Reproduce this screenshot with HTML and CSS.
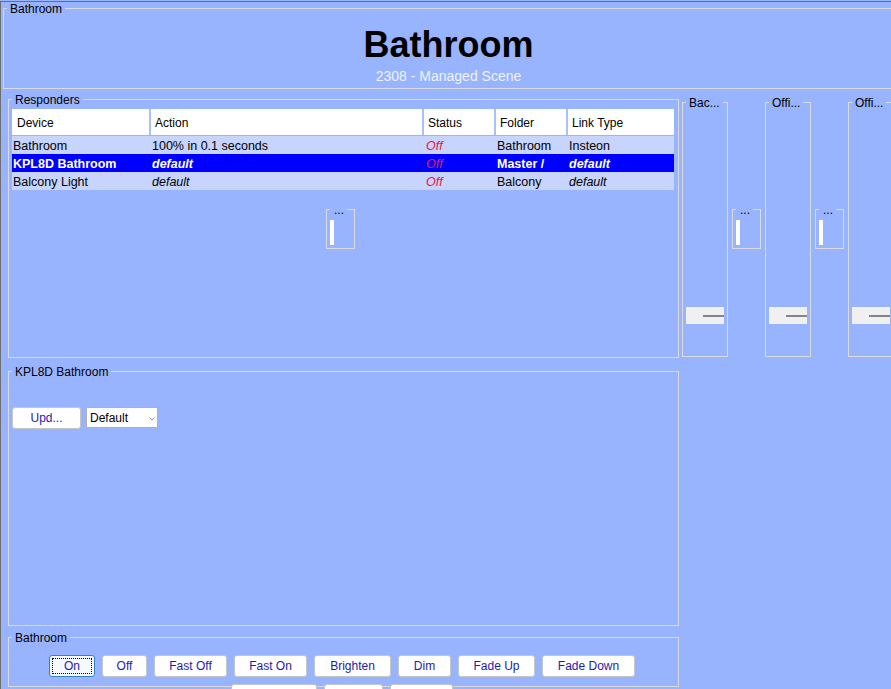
FILE: index.html
```html
<!DOCTYPE html>
<html lang="en">
<head>
<meta charset="utf-8">
<title>Bathroom</title>
<link rel="stylesheet" href="styles.css">
</head>
<body>
<div class="window">
  <fieldset class="group header">
    <legend>Bathroom</legend>
    <div class="header-body">
      <h1 class="title">Bathroom</h1>
      <div class="subtitle">2308 - Managed Scene</div>
    </div>
  </fieldset>

  <div class="main">
    <div class="leftcol">
      <fieldset class="group responders">
        <legend>Responders</legend>
        <div class="responders-body">
          <div class="grid" role="table">
            <div class="grid-row grid-head" role="row">
              <div class="cell">Device</div>
              <div class="cell">Action</div>
              <div class="cell">Status</div>
              <div class="cell">Folder</div>
              <div class="cell">Link Type</div>
            </div>
            <div class="grid-row grid-data" role="row">
              <div class="cell">Bathroom</div>
              <div class="cell">100% in 0.1 seconds</div>
              <div class="cell status">Off</div>
              <div class="cell">Bathroom</div>
              <div class="cell">Insteon</div>
            </div>
            <div class="grid-row grid-data selected" role="row">
              <div class="cell">KPL8D Bathroom</div>
              <div class="cell em">default</div>
              <div class="cell status">Off</div>
              <div class="cell">Master /</div>
              <div class="cell em">default</div>
            </div>
            <div class="grid-row grid-data" role="row">
              <div class="cell">Balcony Light</div>
              <div class="cell em">default</div>
              <div class="cell status">Off</div>
              <div class="cell">Balcony</div>
              <div class="cell em">default</div>
            </div>
          </div>
          <fieldset class="group mini mini-center">
            <legend>...</legend>
            <div class="mini-body"><div class="level-bar"></div></div>
          </fieldset>
        </div>
      </fieldset>

      <fieldset class="group kpl">
        <legend>KPL8D Bathroom</legend>
        <div class="kpl-body">
          <button class="btn btn-upd" type="button">Upd...</button>
          <div class="combo">
            <span>Default</span>
            <svg class="chev" width="6" height="4" viewBox="0 0 6 4"><polyline points="0.5,0.5 3,3.2 5.5,0.5" fill="none" stroke="#8a8a8a" stroke-width="1"/></svg>
          </div>
        </div>
      </fieldset>

      <fieldset class="group scene">
        <legend>Bathroom</legend>
        <div class="scene-body">
          <button class="btn btn-on focused" type="button">On</button>
          <button class="btn btn-off" type="button">Off</button>
          <button class="btn btn-fastoff" type="button">Fast Off</button>
          <button class="btn btn-faston" type="button">Fast On</button>
          <button class="btn btn-brighten" type="button">Brighten</button>
          <button class="btn btn-dim" type="button">Dim</button>
          <button class="btn btn-fadeup" type="button">Fade Up</button>
          <button class="btn btn-fadedown" type="button">Fade Down</button>
          <button class="btn btn-stop" type="button" aria-label="Fade Stop"></button>
          <button class="btn btn-beep" type="button" aria-label="Beep"></button>
          <button class="btn btn-query" type="button" aria-label="Query"></button>
        </div>
      </fieldset>
    </div>

    <div class="rightcol">
      <fieldset class="group vgroup">
        <legend>Bac...</legend>
        <div class="vgroup-body"><div class="thumb"><div class="thumb-line"></div></div></div>
      </fieldset>
      <fieldset class="group mini">
        <legend>...</legend>
        <div class="mini-body"><div class="level-bar"></div></div>
      </fieldset>
      <fieldset class="group vgroup">
        <legend>Offi...</legend>
        <div class="vgroup-body"><div class="thumb"><div class="thumb-line"></div></div></div>
      </fieldset>
      <fieldset class="group mini">
        <legend>...</legend>
        <div class="mini-body"><div class="level-bar"></div></div>
      </fieldset>
      <fieldset class="group vgroup">
        <legend>Offi...</legend>
        <div class="vgroup-body"><div class="thumb"><div class="thumb-line"></div></div></div>
      </fieldset>
    </div>
  </div>
</div>
</body>
</html>
```

FILE: styles.css
```css
* { box-sizing: border-box; }

html, body {
  margin: 0;
  padding: 0;
}

body {
  width: 891px;
  height: 689px;
  overflow: hidden;
  background: #98b4fe;
  font-family: "Liberation Sans", Arial, sans-serif;
  font-size: 12px;
  color: #000;
}

.window {
  width: 960px;
  min-height: 720px;
  margin-top: 1px;
  border-top: 1px solid #6e6e6e;
  border-left: 1px solid #6e6e6e;
}

/* group boxes */
.group {
  margin: 0;
  padding: 0;
  min-width: 0;
  border: 1px solid #dadada;
}

.group > legend {
  margin-left: 3px;
  padding: 2px 3px 0;
  font-size: 12px;
  line-height: 12px;
  color: #000;
  white-space: nowrap;
}

/* header */
.header {
  width: 891px;
  margin: -1px 0 0 2px;
}

.header-body {
  padding: 12px 0 4px;
  text-align: center;
}

.title {
  margin: 0;
  font-size: 36px;
  line-height: 36px;
  font-weight: bold;
  color: #000;
}

.subtitle {
  margin-top: 5px;
  font-size: 14px;
  line-height: 16px;
  color: #eef2ff;
}

/* main area */
.main {
  display: flex;
  align-items: flex-start;
}

.leftcol {
  width: 671px;
  margin: 3px 0 0 7px;
}

.rightcol {
  display: flex;
  align-items: flex-start;
  gap: 4px;
  margin: 6px 0 0 3px;
}

/* responders */
.responders-body {
  height: 251px;
  padding-top: 3px;
}

.grid {
  width: 662px;
  margin-left: 3px;
}

.grid-row {
  display: grid;
  grid-template-columns: 137px 271px 70px 70px 106px;
  column-gap: 2px;
}

.grid-head {
  height: 26px;
  margin-bottom: 1px;
  background: #a9c0fc;
}

.grid-head .cell {
  background: #fff;
  padding: 3px 0 0 4px;
  line-height: 23px;
  font-size: 12px;
}

.grid-head .cell:first-child { padding-left: 5px; }

.grid-data {
  height: 18px;
  background: #c6d4fe;
  font-size: 12.5px;
}

.grid-data .cell {
  padding: 2px 0 0 1px;
  line-height: 16px;
  white-space: nowrap;
  overflow: hidden;
}

.grid-data .em { font-style: italic; }

.grid-data .status {
  font-style: italic;
  color: #f0103c;
  padding-left: 2px;
}

.grid-data.selected {
  background: #0000ff;
  color: #fff;
  font-weight: bold;
}

.grid-data.selected .status {
  font-weight: normal;
  color: #f01848;
}

/* small level boxes */
.mini { width: 29px; }

.mini > legend { padding: 2px 3px 0 4px; }

.mini-body {
  height: 32px;
  padding: 4px 0 0 3px;
}

.level-bar {
  width: 4px;
  height: 25px;
  background: #fff;
}

.mini-center { margin: 12px 0 0 317px; }

.rightcol .mini { margin-top: 107px; }

/* vertical slider groups */
.vgroup { width: 46px; }

.vgroup-body {
  height: 247px;
  padding-top: 198px;
}

.thumb {
  width: 38px;
  height: 17px;
  margin-left: 3px;
  padding-top: 8px;
  background: #f0f0f0;
  display: flex;
  justify-content: flex-end;
}

.thumb-line {
  width: 21px;
  height: 2px;
  background: #858585;
}

/* KPL section */
.kpl { margin-top: 6px; }

.kpl-body {
  height: 247px;
  padding: 29px 0 0 3px;
  display: flex;
  align-items: flex-start;
  gap: 5px;
}

.btn {
  height: 22px;
  margin: 0;
  padding: 0;
  border: 1px solid #c6c6c6;
  border-radius: 3px;
  background: #fff;
  font-family: "Liberation Sans", Arial, sans-serif;
  font-size: 12px;
  line-height: 20px;
  color: #1c1caa;
  text-align: center;
  white-space: nowrap;
}

.btn-upd { width: 69px; }

.btn-on { width: 46px; }
.btn-off { width: 45px; }
.btn-fastoff { width: 73px; }
.btn-faston { width: 73px; }
.btn-brighten { width: 77px; }
.btn-dim { width: 53px; }
.btn-fadeup { width: 77px; }
.btn-fadedown { width: 93px; }
.btn-stop { width: 86px; }
.btn-beep { width: 59px; }
.btn-query { width: 63px; }

.btn.focused {
  border-color: #3a7fc4;
  background: #f6f9fd;
  outline: 1px dotted #000;
  outline-offset: -4px;
}

.combo {
  width: 72px;
  height: 21px;
  padding: 0 2px 0 3px;
  border: 1px solid #b0b0b0;
  background: #fff;
  display: flex;
  align-items: center;
  justify-content: space-between;
  font-size: 12px;
  color: #000;
}

.chev { margin-top: 2px; }

/* scene buttons */
.scene { margin-top: 4px; }

.scene-body {
  height: 42px;
  padding: 11px 3px 0 0;
  display: flex;
  flex-wrap: wrap;
  justify-content: center;
  align-content: flex-start;
  gap: 7px;
}
```
